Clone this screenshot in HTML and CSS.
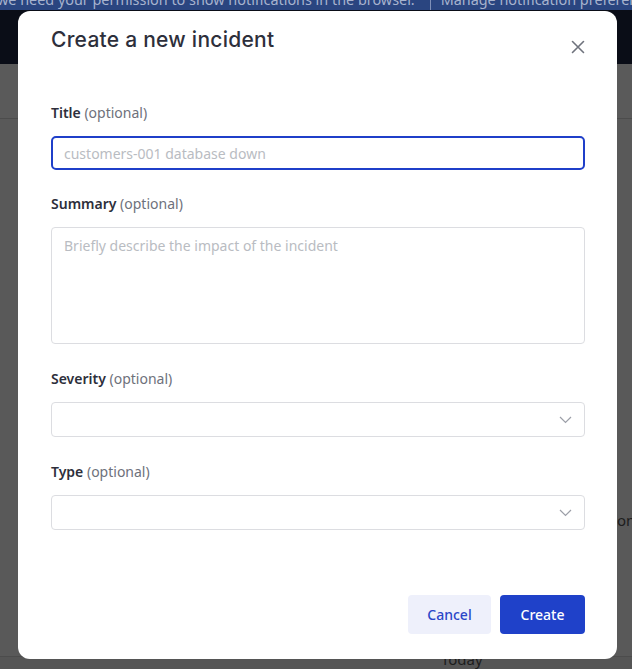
FILE: index.html
```html
<!DOCTYPE html>
<html lang="en">
<head>
<meta charset="utf-8">
<title>Create a new incident</title>
<link rel="stylesheet" href="styles.css">
</head>
<body>
<div class="page">
  <div class="banner">
    <span class="banner-msg">we need your permission to show notifications in the browser.</span>
    <span class="banner-link">Manage notification preferences</span>
  </div>
  <div class="nav"></div>
  <div class="toolbar"></div>
  <div class="rows">
    <div class="row row-a"><span class="row-text">on</span></div>
    <div class="row row-b"><span class="row-today">Today</span></div>
  </div>
</div>

<div class="overlay">
  <div class="modal" role="dialog" aria-labelledby="modal-title">
    <div class="modal-header">
      <h1 id="modal-title" class="modal-title">Create a new incident</h1>
      <button class="close-btn" aria-label="Close">
        <svg width="14" height="14" viewBox="0 0 14 14"><path d="M1.5 1.5 L12.5 12.5 M12.5 1.5 L1.5 12.5" stroke="#6f737d" stroke-width="1.6" stroke-linecap="round" fill="none"/></svg>
      </button>
    </div>

    <div class="field">
      <label class="label"><span class="label-main">Title</span> <span class="label-opt">(optional)</span></label>
      <input class="input input-focus" type="text" placeholder="customers-001 database down">
    </div>

    <div class="field field-wide">
      <label class="label"><span class="label-main">Summary</span> <span class="label-opt">(optional)</span></label>
      <textarea class="textarea" placeholder="Briefly describe the impact of the incident"></textarea>
    </div>

    <div class="field field-wide">
      <label class="label"><span class="label-main">Severity</span> <span class="label-opt">(optional)</span></label>
      <div class="select">
        <svg width="13" height="8" viewBox="0 0 13 8"><path d="M1 1 L6.5 6.5 L12 1" stroke="#9c9fa8" stroke-width="1.2" fill="none"/></svg>
      </div>
    </div>

    <div class="field">
      <label class="label"><span class="label-main">Type</span> <span class="label-opt">(optional)</span></label>
      <div class="select">
        <svg width="13" height="8" viewBox="0 0 13 8"><path d="M1 1 L6.5 6.5 L12 1" stroke="#9c9fa8" stroke-width="1.2" fill="none"/></svg>
      </div>
    </div>

    <div class="modal-footer">
      <button class="btn btn-secondary">Cancel</button>
      <button class="btn btn-primary">Create</button>
    </div>
  </div>
</div>
</body>
</html>
```

FILE: styles.css
```css
* { box-sizing: border-box; }

body {
  margin: 0;
  width: 632px;
  height: 669px;
  overflow: hidden;
  background: #595959;
  font-family: "Noto Sans", "Open Sans", sans-serif;
}

/* background page (dimmed) */
.page {
  display: flex;
  flex-direction: column;
  height: 669px;
}

.banner {
  height: 10px;
  background: #2a4580;
  display: flex;
  align-items: flex-end;
  overflow: hidden;
  white-space: nowrap;
  font-size: 14.4px;
  color: #a7b3ce;
}

.banner-msg {
  line-height: 20px;
  margin-left: -3px;
  padding-right: 15px;
}

.banner-link {
  line-height: 20px;
  border-left: 1px solid #7f90b8;
  padding-left: 10px;
}

.nav {
  height: 55px;
  background: #0a0d17;
}

.toolbar {
  height: 55px;
  background: #5a5a5a;
  border-bottom: 1px solid #4c4c4c;
}

.rows {
  flex: 1;
  display: flex;
  flex-direction: column;
}

.row-a {
  height: 538px;
  display: flex;
  align-items: flex-end;
  padding-bottom: 6px;
  border-bottom: 1px solid #4c4c4c;
}

.row-text {
  margin-left: 617px;
  font-size: 15px;
  line-height: 20px;
  color: #1d1d1d;
  position: relative;
  top: -120px;
}

.row-b {
  flex: 1;
  background: #555555;
  overflow: hidden;
}

.row-today {
  display: block;
  margin-left: 441px;
  margin-top: -8px;
  font-size: 15px;
  line-height: 20px;
  color: #1d1d1d;
}

/* overlay + modal */
.overlay {
  position: fixed;
  inset: 0;
  display: flex;
  justify-content: center;
  align-items: flex-start;
  padding-top: 11px;
  padding-left: 3px;
}

.modal {
  width: 599px;
  height: 648px;
  background: #ffffff;
  border-radius: 12px;
  padding: 15px 32px 25px 33px;
  display: flex;
  flex-direction: column;
}

.modal-header {
  display: flex;
  justify-content: space-between;
  align-items: flex-start;
  height: 28px;
  margin-bottom: 49px;
}

.modal-title {
  margin: 0;
  font-family: "Inter", "Lato", sans-serif;
  font-weight: 500;
  font-size: 21px;
  line-height: 28px;
  letter-spacing: 0.25px;
  color: #2d2f3b;
}

.close-btn {
  border: 0;
  background: none;
  padding: 0;
  margin-top: 14px;
  width: 14px;
  height: 14px;
  display: flex;
}

.field {
  display: flex;
  flex-direction: column;
  margin-bottom: 24px;
}

.field-wide { margin-bottom: 25px; }

.label {
  font-size: 14px;
  line-height: 20px;
  margin-bottom: 13px;
}

.label-main {
  font-weight: 600;
  color: #2d2f3b;
}

.label-opt {
  color: #6e717b;
}

.input {
  height: 34px;
  border: 2px solid #1f3fc9;
  border-radius: 5px;
  padding: 0 11px;
  font-family: inherit;
  font-size: 14px;
  outline: none;
}

.input::placeholder,
.textarea::placeholder {
  color: #b9bcc2;
}

.textarea {
  height: 117px;
  border: 1px solid #dcdde1;
  border-radius: 4px;
  padding: 8px 12px;
  font-family: inherit;
  font-size: 14px;
  line-height: 20px;
  resize: none;
  outline: none;
}

.select {
  height: 35px;
  border: 1px solid #dcdde1;
  border-radius: 4px;
  display: flex;
  justify-content: flex-end;
  align-items: center;
  padding-right: 12px;
}

.modal-footer {
  margin-top: auto;
  display: flex;
  justify-content: flex-end;
  gap: 9px;
}

.btn {
  height: 39px;
  border: 0;
  border-radius: 4px;
  font-family: inherit;
  font-size: 14px;
  font-weight: 500;
}

.btn-secondary {
  width: 83px;
  background: #eef0fb;
  color: #2a46c8;
}

.btn-primary {
  width: 85px;
  background: #1f41c9;
  color: #ffffff;
}
```
